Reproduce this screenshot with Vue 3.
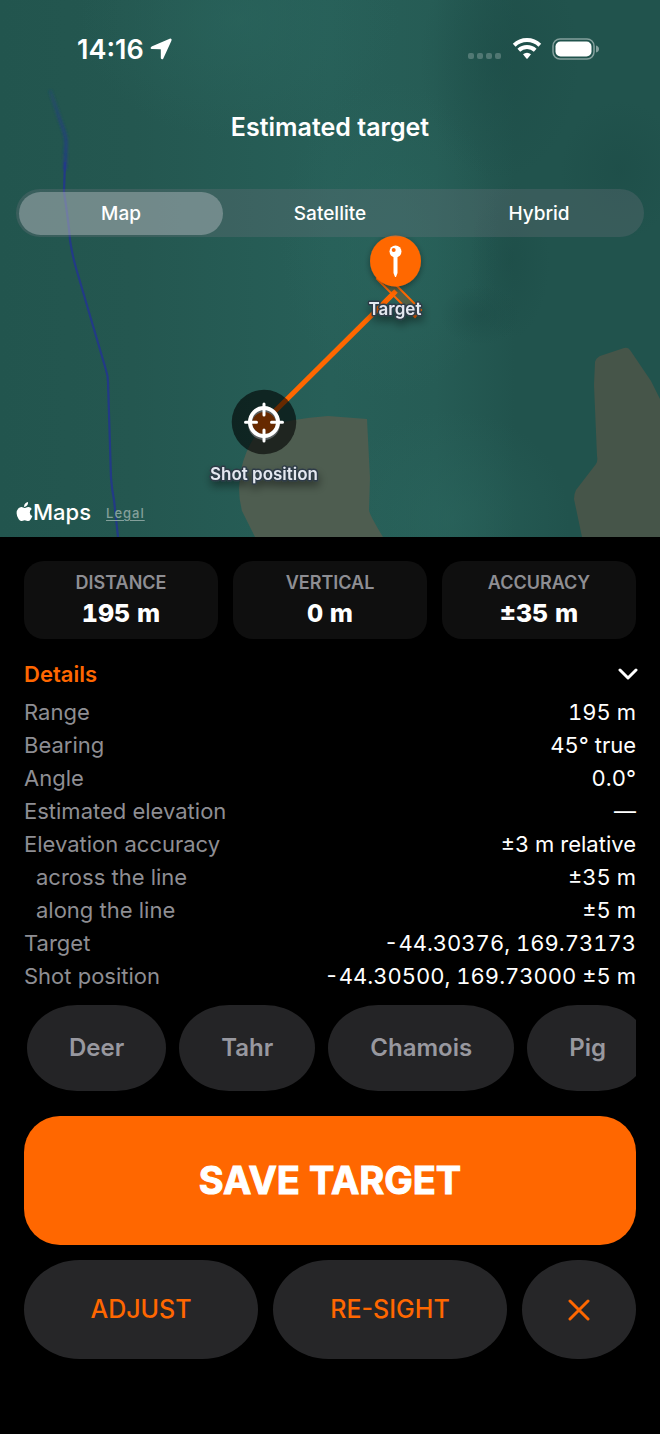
<template>
  <main class="screen">
    <section class="map">
      <svg class="map-canvas" viewBox="0 0 660 537" preserveAspectRatio="xMidYMid slice" role="img" aria-label="Map">
        <defs>
          <linearGradient id="land" x1="0" y1="0" x2="1" y2="0">
            <stop offset="0" stop-color="#22554e" />
            <stop offset="0.2" stop-color="#245750" />
            <stop offset="0.5" stop-color="#275f58" />
            <stop offset="0.66" stop-color="#265c55" />
            <stop offset="0.78" stop-color="#21534d" />
            <stop offset="1" stop-color="#21534d" />
          </linearGradient>
          <radialGradient id="ridge">
            <stop offset="0" stop-color="#2b675f" stop-opacity="0.5" />
            <stop offset="1" stop-color="#2b675f" stop-opacity="0" />
          </radialGradient>
          <radialGradient id="valley">
            <stop offset="0" stop-color="#1c4b46" stop-opacity="0.5" />
            <stop offset="1" stop-color="#1c4b46" stop-opacity="0" />
          </radialGradient>
          <linearGradient id="river" gradientUnits="userSpaceOnUse" x1="0" y1="88" x2="0" y2="190">
            <stop offset="0" stop-color="#22447a" stop-opacity="0.3" />
            <stop offset="0.3" stop-color="#224476" stop-opacity="0.7" />
            <stop offset="1" stop-color="#223a86" />
          </linearGradient>
          <filter id="soft" x="-200%" width="500%">
            <feGaussianBlur stdDeviation="1.2" />
          </filter>
          <filter id="shade" x="-50%" y="-50%" width="200%" height="200%">
            <feDropShadow dx="0" dy="2" stdDeviation="3" flood-color="#000" flood-opacity="0.4" />
          </filter>
          <filter id="label" x="-30%" y="-60%" width="160%" height="260%">
            <feDropShadow dx="1" dy="5" stdDeviation="4" flood-color="#000" flood-opacity="0.4" />
          </filter>
        </defs>

        <rect width="660" height="537" fill="url(#land)" />
        <ellipse cx="240" cy="20" rx="160" ry="120" fill="url(#ridge)" />
        <ellipse cx="390" cy="240" rx="110" ry="160" fill="url(#ridge)" />
        <ellipse cx="450" cy="520" rx="120" ry="110" fill="url(#ridge)" />
        <ellipse cx="500" cy="60" rx="80" ry="120" fill="url(#valley)" />
        <ellipse cx="510" cy="260" rx="40" ry="80" fill="url(#valley)" />
        <ellipse cx="480" cy="315" rx="40" ry="30" fill="url(#valley)" />
        <ellipse cx="620" cy="170" rx="60" ry="70" fill="url(#valley)" />

        <path class="scree" d="M255 537L242 511Q239 500 239 488L241 470Q246 446 262 427Q290 419 328 416L367 419L370 478L369 510Q369 514 383 537Z" />
        <path class="scree dark" d="M595 362Q596 358 600 356L624 348Q628 347 630 350L651 381L660 399V537H582L574 499Q574 494 576 490L596 464Q598 461 597 456L594 385Z" />

        <path d="M50 90L60 120Q66 135 66 142L65 170" fill="none" stroke="url(#river)" stroke-width="4" filter="url(#soft)" />
        <path d="M65 162L64 192Q69 225 70 240Q72 254 76 268L106 370Q108 376 108 382L111 478Q112 490 114 500L118 537" fill="none" stroke="#223a86" stroke-width="2.200" />

        <line x1="264" y1="422" x2="394" y2="293" stroke="#ff6700" stroke-width="5" />
        <path d="M377 279L383 272L421 310L415 317Z" fill="#ff6700" fill-opacity="0.2" stroke="#ff6700" stroke-width="2" />
        <line x1="384" y1="303" x2="396" y2="291" stroke="#ff6700" stroke-width="5" />

        <!-- target pin -->
        <circle cx="395.500" cy="261" r="25.500" fill="#ff6700" filter="url(#shade)" />
        <circle cx="395.500" cy="251.500" r="6" fill="#fff" />
        <circle cx="393.700" cy="250" r="2" fill="#ff6700" />
        <path d="M393.500 257h4V273L396.200 276.500Q395.500 277.500 394.800 276.500L393.500 273Z" fill="#fff" />
        <text class="pin-label" x="395" y="315">Target</text>

        <!-- shot position -->
        <circle cx="264" cy="422" r="12" fill="#ff6700" />
        <circle cx="264" cy="422" r="32.300" fill="#000" fill-opacity="0.6" />
        <circle cx="264" cy="424" r="14" fill="none" stroke="#5a5f60" stroke-width="4" />
        <circle cx="264" cy="422" r="14" fill="none" stroke="#fff" stroke-width="4" />
        <path d="M264 404v11M264 430v11M245.500 422.300h11M271.500 422.300h11" stroke="#fff" stroke-width="3" stroke-linecap="round" />
        <text class="pin-label" x="264" y="480">Shot position</text>
      </svg>

      <header class="overlay">
        <div class="status">
          <div class="clock">
            <span>14:16</span>
            <svg width="22" height="22" viewBox="0 0 22 22" aria-hidden="true">
              <path d="M20 1.500Q21.200 1 20.700 2.300L12.700 20Q12 21 11.600 20V11.500Q11.600 10.400 10.500 10.400L2 10.300Q.8 10 1.900 9.300Z" fill="#fff" stroke="#fff" stroke-width="1.600" stroke-linejoin="round" />
            </svg>
          </div>
          <div class="signals">
            <svg width="34" height="22" viewBox="0 0 34 22" aria-hidden="true">
              <g fill="#fff" fill-opacity="0.220">
                <rect v-for="n in 4" :key="n" :x="(n - 1) * 9" y="15" width="6" height="6" rx="2" />
              </g>
            </svg>
            <svg width="30" height="22" viewBox="0 0 30 22" aria-hidden="true">
              <g fill="none" stroke="#fff" stroke-width="4">
                <path d="M2.200 7.300A18.400 18.400 0 0 1 27.800 7.300" />
                <path d="M6.800 12.200A12 12 0 0 1 23.200 12.200" />
              </g>
              <path d="M11 16.200A6 6 0 0 1 19 16.200L15.600 20.400Q15 21 14.400 20.400Z" fill="#fff" />
            </svg>
            <svg width="48" height="22" viewBox="0 0 48 22" aria-hidden="true">
              <rect x="1" y="1" width="41" height="20" rx="7" fill="none" stroke="#fff" stroke-opacity="0.450" stroke-width="1.500" />
              <rect x="3.500" y="3.500" width="36" height="15" rx="5" fill="#fff" />
              <path d="M44 7.500Q47 8.500 47 11T44 14.500Z" fill="#fff" fill-opacity="0.450" />
            </svg>
          </div>
        </div>

        <h1>Estimated target</h1>

        <div class="segments" role="radiogroup" aria-label="Map type">
          <label v-for="type in mapTypes" :key="type" :class="{ active: mapType === type }">
            <input v-model="mapType" type="radio" name="map-type" :value="type" />
            {{ type }}
          </label>
        </div>

        <div class="credits">
          <svg width="17" height="20" viewBox="0 0 17 20" aria-hidden="true">
            <path d="M12 0Q12.300 2 11 3.500Q9.700 5 8.100 4.900Q7.900 3 9.200 1.600Q10.400 .3 12 0ZM8.400 5.900Q9 5.900 10.200 5.400Q11.400 4.900 12.400 5Q14.600 5.200 15.800 6.900Q13.800 8.200 13.800 10.400Q13.900 13 16.400 14.100Q15.800 15.900 14.600 17.500Q13.500 19.100 12.200 19.100Q11.500 19.100 10.600 18.700Q9.600 18.300 8.700 18.300Q7.800 18.300 6.800 18.700Q5.900 19.100 5.300 19.100Q4 19.200 2.700 17.300Q.7 14.500 .6 11.300Q.6 8.200 2.300 6.500Q3.600 5.200 5.400 5.100Q6.300 5.100 7.200 5.500Q8 5.900 8.400 5.900Z" fill="#fff" />
          </svg>
          <span>Maps</span>
          <a href="#legal">Legal</a>
        </div>
      </header>
    </section>

    <section class="panel">
      <div class="stats">
        <div v-for="stat in stats" :key="stat.label" class="stat">
          <span class="stat-label">{{ stat.label }}</span>
          <strong>{{ stat.value }}</strong>
        </div>
      </div>

      <button class="details-toggle" type="button" :aria-expanded="open" @click="open = !open">
        Details
        <svg :class="{ closed: !open }" width="20" height="12" viewBox="0 0 20 12" aria-hidden="true">
          <path d="M2 2L10 10L18 2" fill="none" stroke="#fff" stroke-width="3" stroke-linecap="round" stroke-linejoin="round" />
        </svg>
      </button>

      <dl v-if="open" class="details">
        <div v-for="row in rows" :key="row.label" :class="{ sub: row.sub }">
          <dt>{{ row.label }}</dt>
          <dd>{{ row.value }}</dd>
        </div>
      </dl>

      <div class="species">
        <button
          v-for="name in species"
          :key="name"
          type="button"
          :aria-pressed="selected === name"
          @click="selected = name"
        >
          {{ name }}
        </button>
      </div>

      <button class="save" type="button">SAVE TARGET</button>

      <div class="actions">
        <button type="button">ADJUST</button>
        <button type="button">RE-SIGHT</button>
        <button class="close" type="button" aria-label="Close">
          <svg width="22" height="22" viewBox="0 0 22 22" aria-hidden="true">
            <path d="M2 2L20 20M20 2L2 20" stroke="#ff6700" stroke-width="3" stroke-linecap="round" />
          </svg>
        </button>
      </div>
    </section>
  </main>
</template>

<script setup>
import { ref } from 'vue'

// Data
const mapTypes = ['Map', 'Satellite', 'Hybrid']
const mapType = ref('Map')
const open = ref(true)
const selected = ref('')

const stats = [
  { label: 'DISTANCE', value: '195 m' },
  { label: 'VERTICAL', value: '0 m' },
  { label: 'ACCURACY', value: '±35 m' }
]

const rows = [
  { label: 'Range', value: '195 m' },
  { label: 'Bearing', value: '45° true' },
  { label: 'Angle', value: '0.0°' },
  { label: 'Estimated elevation', value: '—' },
  { label: 'Elevation accuracy', value: '±3 m relative' },
  { label: 'across the line', value: '±35 m', sub: true },
  { label: 'along the line', value: '±5 m', sub: true },
  { label: 'Target', value: '-44.30376, 169.73173' },
  { label: 'Shot position', value: '-44.30500, 169.73000 ±5 m' }
]

const species = ['Deer', 'Tahr', 'Chamois', 'Pig']
</script>

<style>
body {
  margin: 0;
  background: #000;
}
</style>

<style scoped>
.screen {
  min-height: 100vh;
  background: #000;
  color: #fff;
  font-family: Inter, "Liberation Sans", sans-serif;
}

button {
  border: 0;
  padding: 0;
  font: inherit;
  cursor: pointer;
}

.map {
  position: relative;
  display: flex;
  aspect-ratio: 660 / 537;
}

.map-canvas {
  position: absolute;
  inset: 0;
  width: 100%;
  height: 100%;
}

.scree {
  fill: #4e5d50;

  &.dark {
    fill: #465549;
  }
}

.pin-label {
  fill: #e4e8f0;
  stroke: #2e3b47;
  stroke-width: 3px;
  stroke-linejoin: round;
  paint-order: stroke;
  font-size: 17px;
  font-weight: 600;
  text-anchor: middle;
  filter: url(#label);
}

.overlay {
  position: relative;
  flex: 1;
  display: flex;
  flex-direction: column;
  padding: 34px 16px 8px;
}

.status {
  display: flex;
  justify-content: space-between;
  align-items: center;
  height: 30px;
  padding: 0 44px 0 61px;
}

.clock {
  display: flex;
  align-items: center;
  gap: 6px;
  font-size: 27px;
  font-weight: 600;
}

.signals {
  display: flex;
  align-items: center;
  gap: 10px;
}

h1 {
  margin: 47px 0 46px;
  font-size: 25px;
  line-height: 32px;
  font-weight: 600;
  text-align: center;
}

.segments {
  display: flex;
  gap: 5px;
  padding: 3px 3px 2px;
  border-radius: 24px;
  background: rgba(120, 120, 128, 0.28);

  & label {
    flex: 1;
    position: relative;
    border-radius: 22px;
    font-size: 19px;
    font-weight: 500;
    line-height: 43px;
    text-align: center;
    cursor: pointer;
  }

  & .active {
    background: rgba(194, 200, 206, 0.4);
  }

  & input {
    position: absolute;
    inset: 0;
    margin: 0;
    opacity: 0;
    cursor: pointer;
  }
}

.credits {
  display: flex;
  align-items: center;
  margin-top: auto;
  font-size: 22px;
  font-weight: 500;
  line-height: 32px;

  & a {
    margin-left: 15px;
    padding-top: 3px;
    color: #84a09b;
    font-size: 13px;
    font-weight: 500;
    letter-spacing: 1px;
    text-underline-offset: 2px;
  }
}

.panel {
  display: flex;
  flex-direction: column;
  padding: 24px;
}

.stats {
  display: flex;
  gap: 15px;
}

.stat {
  flex: 1;
  display: flex;
  flex-direction: column;
  align-items: center;
  padding: 8px 0 10px;
  border-radius: 20px;
  background: #0f0f0f;

  & strong {
    font-size: 25px;
    font-weight: 800;
    line-height: 32px;
    font-variant-numeric: tabular-nums;
  }
}

.stat-label {
  color: #8e8e93;
  font-size: 18px;
  font-weight: 600;
  line-height: 28px;
}

.details-toggle {
  display: flex;
  justify-content: space-between;
  align-items: center;
  margin-top: 16px;
  background: none;
  color: #ff6700;
  font-size: 22px;
  font-weight: 600;
  line-height: 38px;

  & svg {
    margin-right: -2px;
  }

  & .closed {
    transform: rotate(-90deg);
  }
}

.details {
  margin: 3px 0 0;
  font-size: 22px;
  line-height: 33px;

  & div {
    display: flex;
    justify-content: space-between;
  }

  & dt {
    color: #8e8e93;
  }

  & dd {
    margin: 0;
    font-variant-numeric: tabular-nums;
  }

  & .sub dt {
    padding-left: 12px;
  }
}

.species {
  display: flex;
  gap: 13px;
  margin-top: 12px;
  padding-left: 3px;
  overflow: hidden;

  & button {
    flex: none;
    padding: 0 42px;
    border-radius: 50px / 43px;
    background: #242426;
    color: #98989f;
    font-size: 24px;
    font-weight: 600;
    line-height: 86px;
  }
}

.save {
  margin-top: 25px;
  border-radius: 36px;
  background: #ff6700;
  color: #fff;
  font-size: 38px;
  font-weight: 700;
  line-height: 129px;
  -webkit-text-stroke: 1px #fff;
}

.actions {
  display: flex;
  gap: 15px;
  margin-top: 15px;

  & button {
    flex: 1;
    display: flex;
    justify-content: center;
    align-items: center;
    border-radius: 56px / 50px;
    background: #262628;
    color: #ff6700;
    font-size: 25px;
    font-weight: 500;
    line-height: 99px;
  }

  & .close {
    flex: 0 0 114px;
  }
}
</style>
